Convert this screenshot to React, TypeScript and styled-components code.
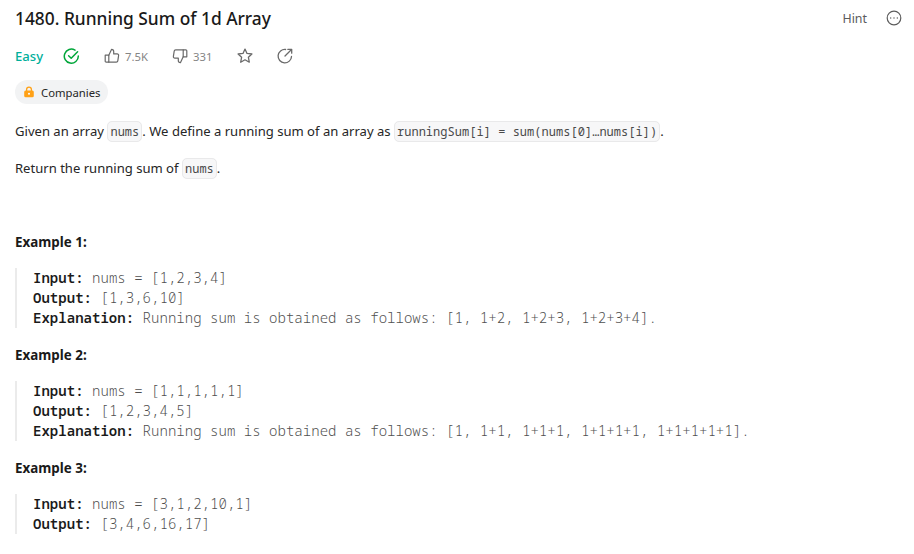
import React from "react";
import styled, { createGlobalStyle } from "styled-components";

const Global = createGlobalStyle`
  *, *::before, *::after { box-sizing: border-box; }
  body { margin: 0; background: #fff; font-family: "Noto Sans", "Open Sans", sans-serif; color: #262626; }
`;

const Page = styled.main`
  display: flex;
  flex-direction: column;
  width: 914px;
  height: 554px;
  overflow: hidden;
  padding: 5px 12px 0 15px;
`;

const Header = styled.header`
  display: flex;
  align-items: center;
  justify-content: space-between;
  height: 26px;
`;

const Title = styled.h1`
  margin: 0;
  font-size: 17.35px;
  font-weight: 500;
  line-height: 26px;
  color: #1a1a1a;
`;

const HeaderActions = styled.div`
  display: flex;
  align-items: center;
  gap: 19px;
  color: #5c5c5c;
`;

const Hint = styled.span`
  font-size: 12.4px;
`;

const Meta = styled.div`
  display: flex;
  align-items: center;
  height: 24px;
  margin-top: 13px;
  color: #6a6a6a;
`;

const Difficulty = styled.span`
  width: 48px;
  font-size: 13.1px;
  font-weight: 500;
  color: #00af9b;
`;

const MetaItem = styled.div<{ $width: number; $gap?: number; $solved?: boolean }>`
  display: flex;
  align-items: center;
  gap: ${(p) => p.$gap ?? 4}px;
  width: ${(p) => p.$width}px;
  font-size: 11.3px;
  color: ${(p) => (p.$solved ? "#01a63a" : "#6a6a6a")};
`;

const Count = styled.span`
  color: #858585;
`;

const CompanyTag = styled.div`
  display: flex;
  align-items: center;
  align-self: flex-start;
  gap: 6px;
  height: 24px;
  margin-top: 12px;
  padding: 0 7px 0 8px;
  border-radius: 12px;
  background: #f2f3f4;
  font-size: 11.3px;
  color: #262626;
`;

const Paragraph = styled.p`
  height: 20px;
  margin: 17px 0 0;
  font-size: 13.07px;
  line-height: 20px;
  white-space: nowrap;
`;

const Code = styled.code`
  padding: 1px 2px;
  border: 1px solid #e9e9ea;
  border-radius: 5px;
  background: #f7f7f8;
  font-family: "Noto Sans Mono", "DejaVu Sans Mono", monospace;
  font-size: 12px;
  letter-spacing: 0.03px;
  line-height: 16px;
  color: #4a4a4a;
`;

const Examples = styled.section`
  margin-top: 37px;
`;

const ExampleTitle = styled.h2`
  margin: 17px 0 0;
  font-size: 13.4px;
  font-weight: 700;
  line-height: 20px;
  color: #1a1a1a;
`;

const ExampleBody = styled.pre`
  margin: 16px 0 0;
  padding-left: 16px;
  border-left: 2px solid #ebebeb;
  font-family: "Noto Sans Mono", "DejaVu Sans Mono", monospace;
  font-size: 14px;
  font-weight: 300;
  line-height: 20px;
  letter-spacing: 0.03px;
  color: #4f4f4f;
`;

const Label = styled.strong`
  font-weight: 600;
  color: #1a1a1a;
`;

const Stroke = styled.svg`
  flex: none;
  fill: none;
  stroke: currentColor;
  stroke-linecap: round;
  stroke-linejoin: round;
`;

const SolvedIcon = () => (
  <Stroke width="17" height="17" viewBox="0 0 17 17" strokeWidth="1.5">
    <path d="M12 2.2A7 7 0 1 0 15.3 8" />
    <path d="M5.6 7.7l2.6 2.6 6.4-6.5" />
  </Stroke>
);

const ThumbIcon = () => (
  <Stroke width="16" height="16" viewBox="0 0 16 16" strokeWidth="1.2">
    <path d="M1.2 7.2h3.6v7H2.2a1 1 0 0 1-1-1z" />
    <path d="M4.8 7.2L7.6 1.3c1.3 0 2.1.8 2.1 2.1v2.5h3.4a1.5 1.5 0 0 1 1.5 1.8l-.8 5.2a1.5 1.5 0 0 1-1.5 1.3H4.8" />
  </Stroke>
);

const ThumbDownIcon = () => (
  <Stroke width="16" height="16" viewBox="0 0 16 16" strokeWidth="1.2">
    <path d="M14.8 8.8h-3.6v-7h2.6a1 1 0 0 1 1 1z" />
    <path d="M11.2 8.8L8.4 14.7c-1.3 0-2.1-.8-2.1-2.1v-2.5H2.9a1.5 1.5 0 0 1-1.5-1.8l.8-5.2a1.5 1.5 0 0 1 1.5-1.3h7.5" />
  </Stroke>
);

const StarIcon = () => (
  <Stroke width="16" height="16" viewBox="0 0 16 16" strokeWidth="1.3">
    <path d="M8 1.1l2 4.3 4.9.6-3.5 3.3.9 4.9L8 11.8l-4.3 2.4.9-4.9L1.1 6 6 5.4z" />
  </Stroke>
);

const ShareIcon = () => (
  <Stroke width="16" height="16" viewBox="0 0 16 16" strokeWidth="1.3">
    <path d="M8.6 1.5a6.7 6.7 0 1 0 5.9 6.9" />
    <path d="M10.8 1.3h3.9v3.9M14.5 1.5L8 8" />
  </Stroke>
);

const MoreIcon = () => (
  <Stroke width="16" height="16" viewBox="0 0 16 16" strokeWidth="1.2">
    <circle cx="8" cy="8" r="6.8" />
    <path d="M4.7 8h.01M8 8h.01M11.3 8h.01" strokeWidth="1.4" />
  </Stroke>
);

const LockIcon = () => (
  <svg width="12" height="12" viewBox="0 0 12 12" fill="none">
    <path d="M3.6 5V3.6a2.4 2.4 0 0 1 4.8 0V5" stroke="#ffa116" strokeWidth="1.3" />
    <rect x="1.2" y="4.4" width="9.6" height="6.8" rx="1.5" fill="#ffa116" />
    <circle cx="6" cy="7.8" r="1" fill="#fff" />
  </svg>
);

const examples: [string, string][][] = [
  [
    ["Input:", "nums = [1,2,3,4]"],
    ["Output:", "[1,3,6,10]"],
    ["Explanation:", "Running sum is obtained as follows: [1, 1+2, 1+2+3, 1+2+3+4]."],
  ],
  [
    ["Input:", "nums = [1,1,1,1,1]"],
    ["Output:", "[1,2,3,4,5]"],
    ["Explanation:", "Running sum is obtained as follows: [1, 1+1, 1+1+1, 1+1+1+1, 1+1+1+1+1]."],
  ],
  [
    ["Input:", "nums = [3,1,2,10,1]"],
    ["Output:", "[3,4,6,16,17]"],
  ],
];

export default function App() {
  return (
    <Page>
      <Global />
      <Header>
        <Title>1480. Running Sum of 1d Array</Title>
        <HeaderActions>
          <Hint>Hint</Hint>
          <MoreIcon />
        </HeaderActions>
      </Header>
      <Meta>
        <Difficulty>Easy</Difficulty>
        <MetaItem $width={41} $solved><SolvedIcon /></MetaItem>
        <MetaItem $width={68} $gap={5}><ThumbIcon /><Count>7.5K</Count></MetaItem>
        <MetaItem $width={65} $gap={5}><ThumbDownIcon /><Count>331</Count></MetaItem>
        <MetaItem $width={40}><StarIcon /></MetaItem>
        <MetaItem $width={16}><ShareIcon /></MetaItem>
      </Meta>
      <CompanyTag><LockIcon />Companies</CompanyTag>
      <Paragraph>
        Given an array <Code>nums</Code>. We define a running sum of an array as{" "}
        <Code>runningSum[i] = sum(nums[0]…nums[i])</Code>.
      </Paragraph>
      <Paragraph>
        Return the running sum of <Code>nums</Code>.
      </Paragraph>
      <Examples>
        {examples.map((lines, i) => (
          <React.Fragment key={i}>
            <ExampleTitle>Example {i + 1}:</ExampleTitle>
            <ExampleBody>
              {lines.map(([label, text], j) => (
                <div key={j}><Label>{label}</Label> {text}</div>
              ))}
            </ExampleBody>
          </React.Fragment>
        ))}
      </Examples>
    </Page>
  );
}
